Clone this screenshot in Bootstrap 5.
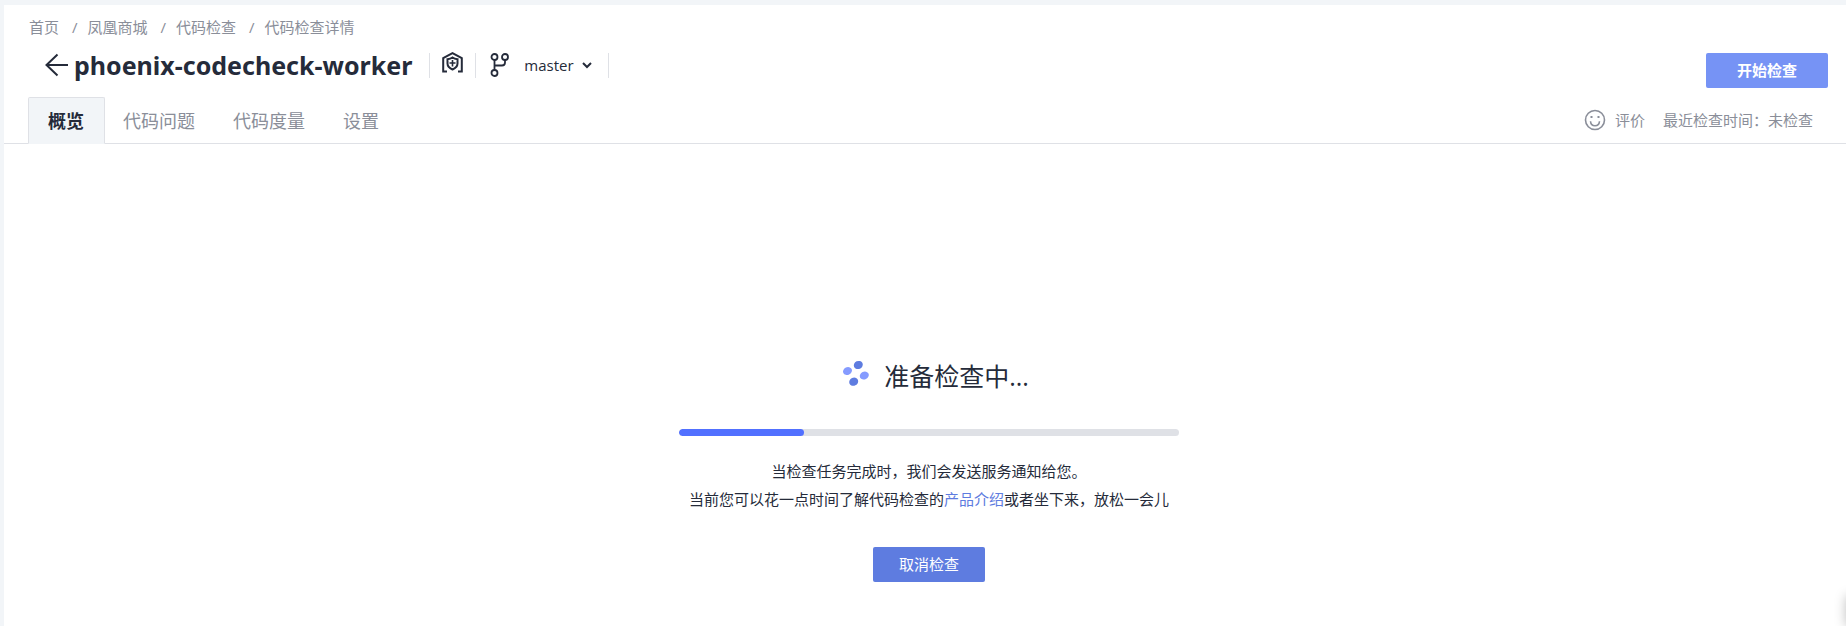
<!DOCTYPE html>
<html lang="zh-CN">
<head>
<meta charset="utf-8">
<meta name="viewport" content="width=device-width, initial-scale=1">
<title>phoenix-codecheck-worker</title>
<link rel="stylesheet" href="https://cdn.jsdelivr.net/npm/bootstrap@5.3.0/dist/css/bootstrap.min.css">
<style>
:root { --ink: #252b3a; --muted: #8a8e99; --line: #dfe1e6; --pale: #f2f5f8; --brand: #5e7ce0; }
body { font-family: "Open Sans", "Noto Sans CJK SC", sans-serif; font-size: 15px; line-height: 20px; color: var(--ink); background: var(--pale); padding: 5px 0 0 4px; }
a { color: var(--muted); text-decoration: none; }
.sheet { min-height: calc(100vh - 5px); }
.crumbs { padding: 12px 25px 0; }
.crumbs .breadcrumb { --bs-breadcrumb-divider-color: var(--muted); --bs-breadcrumb-item-active-color: var(--muted); }
.crumbs .breadcrumb-item + .breadcrumb-item { padding-left: 13px; }
.crumbs .breadcrumb-item + .breadcrumb-item::before { padding-right: 10px; }
.title-row { padding: 8px 18px 0 40px; height: 60px; }
.title-row h1 { font-family: "Noto Sans", sans-serif; font-size: 25px; line-height: 40px; margin-right: 17px; }
.title-row svg { fill: none; stroke: var(--ink); stroke-width: 2; }
.rule { width: 1px; height: 25px; background: var(--line); }
.repo { margin: 0 12px 6px; }
.branch { font-size: 15px; line-height: 24px; color: var(--ink); border: 0; background: none; padding: 0 16px 0 14px; gap: 8px; }
.branch span { margin-left: 6px; }
.action { font-size: 15px; line-height: 35px; border: 0; border-radius: 2px; color: #fff; padding: 0; }
.start { width: 122px; margin-top: 8px; background: #7693f5; }
.cancel { width: 112px; background: var(--brand); }
.tabs { --bs-nav-tabs-border-color: var(--line); padding: 0 33px 0 24px; }
.tabs .nav-link { font-size: 18px; line-height: 24px; color: var(--muted); padding: 11px 19px 10px 17px; border-radius: 2px 2px 0 0; }
.tabs .nav-link.active { color: var(--ink); font-weight: 700; background: var(--pale); border-color: var(--line) var(--line) var(--pale); padding: 11px 20px 10px 19px; }
.extra { color: var(--muted); gap: 18px; }
.extra a { gap: 9px; }
.extra svg { fill: none; stroke: var(--muted); stroke-width: 2; }
.status { padding: 213px 0 40px 8px; }
.heading { gap: 15px; margin-bottom: 32px; }
.heading h2 { font-size: 25px; line-height: 38px; padding-bottom: 2px; }
.meter { width: 500px; max-width: 100%; height: 7px; border-radius: 4px; background: var(--line); }
.meter .progress-bar { background: #5170ff; border-radius: 4px; }
.note { line-height: 28px; margin: 21px 0 34px; }
.note a { color: var(--brand); }
.dock { width: 40px; height: 30px; right: -40px; bottom: 0; box-shadow: 0 0 12px rgba(0, 0, 0, .25); }
</style>
</head>
<body>
<main class="sheet bg-white">
  <nav class="crumbs" aria-label="breadcrumb">
    <ol class="breadcrumb mb-0">
      <li class="breadcrumb-item"><a href="#">首页</a></li>
      <li class="breadcrumb-item"><a href="#">凤凰商城</a></li>
      <li class="breadcrumb-item"><a href="#">代码检查</a></li>
      <li class="breadcrumb-item active" aria-current="page">代码检查详情</li>
    </ol>
  </nav>
  <div class="title-row d-flex align-items-start">
    <div class="d-flex align-items-center">
      <a href="#" class="d-flex me-1" aria-label="返回"><svg width="26" height="26" viewBox="0 0 26 26"><path d="M13.500 2.500 2.500 13l11 10.500M2.500 13H24"/></svg></a>
      <h1 class="fw-bold mb-0">phoenix-codecheck-worker</h1>
      <span class="rule"></span>
      <svg class="repo" width="21" height="21" viewBox="0 0 21 21"><path d="M5 19.500H1.200V6L10.500 1.200 19.800 6v13.500H16"/><path d="M10.500 5.500c1.500 1.200 3 1.600 5 1.700v4.300c0 2.800-2 4.600-5 6-3-1.400-5-3.200-5-6V7.200c2-.1 3.500-.5 5-1.700z"/><path d="M10.500 8v6.500M7.500 11h6" stroke-width="1.600"/></svg>
      <span class="rule"></span>
      <button type="button" class="branch d-flex align-items-center" aria-haspopup="true">
        <svg width="20" height="24" viewBox="0 0 20 24"><g stroke-width="1.800"><circle cx="4.500" cy="4" r="3"/><circle cx="15" cy="4" r="3"/><circle cx="4.500" cy="20" r="3"/><path d="M4.500 7v10M15 7v2.500c0 2-1 3-3 3H4.500"/></g></svg>
        <span>master</span>
        <svg width="10" height="8" viewBox="0 0 10 8"><path d="m1 2 4 4 4-4"/></svg>
      </button>
      <span class="rule"></span>
    </div>
    <button type="button" class="action start fw-bold ms-auto">开始检查</button>
  </div>
  <div class="nav nav-tabs tabs">
    <a class="nav-link active" aria-current="page" href="#">概览</a>
    <a class="nav-link" href="#">代码问题</a>
    <a class="nav-link" href="#">代码度量</a>
    <a class="nav-link" href="#">设置</a>
    <div class="extra d-flex align-items-center ms-auto">
      <a href="#" class="d-flex align-items-center"><svg width="22" height="22" viewBox="0 0 22 22"><circle cx="11" cy="11" r="9.500" stroke-width="1.600"/><path d="M6.500 12.200c.5 6 8.500 6 9 0" stroke-width="1.600"/><path d="M6.500 8h2M13.500 8h2"/></svg>评价</a>
      <span>最近检查时间：未检查</span>
    </div>
  </div>
  <section class="status d-flex flex-column align-items-center text-center">
    <div class="heading d-flex align-items-center">
      <svg width="40" height="40" viewBox="0 0 40 40"><g fill="#859bff"><ellipse cx="18.500" cy="14" rx="4.600" ry="3.900" transform="rotate(-25 18.500 14)"/><ellipse cx="35.300" cy="18.500" rx="4.600" ry="3.900" transform="rotate(-25 35.300 18.500)"/></g><g fill="#5e7ce0"><ellipse cx="29.300" cy="8" rx="4.600" ry="4" transform="rotate(-25 29.300 8)"/><ellipse cx="24.700" cy="24.700" rx="4.600" ry="4" transform="rotate(-25 24.700 24.700)"/></g></svg>
      <h2 class="fw-normal mb-0">准备检查中...</h2>
    </div>
    <div class="progress meter" role="progressbar" aria-label="检查进度" aria-valuenow="25" aria-valuemin="0" aria-valuemax="100"><div class="progress-bar" style="width:25%"></div></div>
    <p class="note">当检查任务完成时，我们会发送服务通知给您。<br>当前您可以花一点时间了解代码检查的<a href="#">产品介绍</a>或者坐下来，放松一会儿</p>
    <button type="button" class="action cancel">取消检查</button>
  </section>
</main>
<aside class="dock position-fixed" aria-hidden="true"></aside>
<script src="https://cdn.jsdelivr.net/npm/bootstrap@5.3.0/dist/js/bootstrap.bundle.min.js"></script>
</body>
</html>
